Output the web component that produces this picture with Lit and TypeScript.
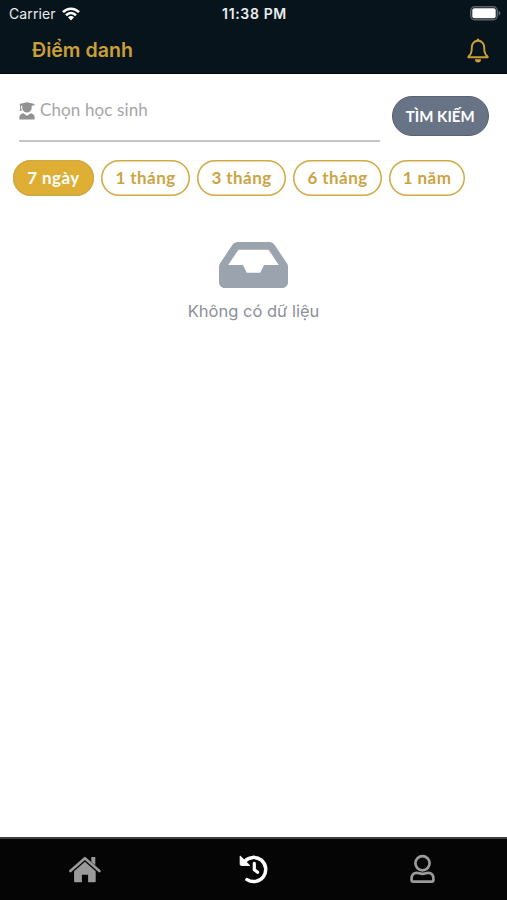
import { LitElement, html, css, svg } from "lit";
import { customElement, state } from "lit/decorators.js";
import { classMap } from "lit/directives/class-map.js";

const wifi = html`<svg class="wifi" viewBox="0 0 18 14">
  <g fill="none" stroke="#fff" stroke-width="2.6">
    <path d="M1 5.2C5.6.6 12.4.6 17 5.2" />
    <path d="M4 8.300c3-2.900 7-2.900 10 0" />
  </g>
  <path d="M6 10.300c1.800-1.600 4.200-1.600 6 0L9 13.500z" fill="#fff" />
</svg>`;

const battery = html`<svg class="battery" viewBox="0 0 31 15">
  <rect x=".75" y=".75" width="26.500" height="13" rx="4" fill="none" stroke="#5a6268" stroke-width="1.500" />
  <rect x="2.300" y="2.300" width="23.400" height="9.900" rx="2" fill="#fff" />
  <path d="M28.600 4.800c2.400 1 2.400 4 0 5z" fill="#5a6268" />
</svg>`;

const bell = html`<svg class="bell" viewBox="0 0 22 25">
  <path d="M11 2.800c-4.100 0-6.200 3-6.200 6.700 0 4.700-.7 6.800-2.600 8.300-.6.5-.9.900-.9 1.400h19.400c0-.5-.3-.9-.9-1.400-1.900-1.500-2.600-3.600-2.600-8.300 0-3.700-2.100-6.700-6.200-6.700z"
    fill="none" stroke="#cb9f38" stroke-width="1.900" stroke-linejoin="round" />
  <path d="M9.500 2.400a1.500 1.900 0 0 1 3 0zM8 21.300h6a3 3.200 0 0 1-6 0z" fill="#cb9f38" />
</svg>`;

const student = html`<svg class="student" viewBox="0 0 16 18">
  <path d="M8 .3 15.600 1.900v1.200L12.700 4v1.900a4.700 4.700 0 0 1-9.400 0V4l-1.200-.4v2.300l.8 2.800H.6l.7-2.800L.9 3 .4 1.900z" />
  <path d="M4.300 11.200 8 13.700l3.700-2.500c2.500.5 4 2 4 4.400v.8c0 .8-.4 1.200-1.200 1.200h-13c-.8 0-1.200-.4-1.200-1.200v-.8c0-2.400 1.500-3.900 4-4.400z" />
</svg>`;

const inbox = html`<svg class="inbox" viewBox="0 64 576 384">
  <path d="M567.938 243.908L462.25 85.374A48.003 48.003 0 0 0 422.311 64H153.689a48 48 0 0 0-39.938 21.374L8.062 243.908A47.994 47.994 0 0 0 0 270.533V400c0 26.510 21.490 48 48 48h480c26.510 0 48-21.490 48-48V270.533a47.994 47.994 0 0 0-8.062-26.625zM162.252 128h251.497l85.333 128H376l-32 64H232l-32-64H76.918l85.334-128z" />
</svg>`;

const tabs = [
  {
    name: "home",
    icon: svg`<path d="M1.400 15 15.900 2.200 30.400 15" fill="none" stroke="#9a9a9a" stroke-width="2.600" stroke-linecap="round" stroke-linejoin="round"/>
      <path d="M22.300 1h4v8.200l-4-3.500zM15.900 5.800 26.700 15.300v10.200c0 .5-.3.800-.8.800h-6.800v-7.500h-6.200v7.500H5.900c-.5 0-.8-.3-.8-.8V15.300z" fill="#9a9a9a"/>`,
  },
  {
    name: "history",
    icon: svg`<path d="M6.800 7.200A12.100 12.100 0 1 1 9 25.600" fill="none" stroke="#fff" stroke-width="3.500" stroke-linecap="round"/>
      <path d="M2.200 2v8.300c0 .7.400 1.100 1.100 1.100h8.400z" fill="#fff" stroke="#fff" stroke-width="1" stroke-linejoin="round"/>
      <path d="M16.300 9.300v6.400l3.300 2.600" fill="none" stroke="#fff" stroke-width="3.200" stroke-linecap="round" stroke-linejoin="round"/>`,
  },
  {
    name: "profile",
    icon: svg`<g fill="none" stroke="#9a9a9a" stroke-width="2.700" stroke-linejoin="round"><circle cx="15.500" cy="9.300" r="7.100"/>
      <path d="M9.700 18.800c2.300 0 2.800 1 5.800 1s3.500-1 5.800-1c3.300 0 5.100 2.500 5.100 5.800v1.500c0 1-.5 1.500-1.500 1.500H6.100c-1 0-1.500-.5-1.500-1.500v-1.500c0-3.300 1.800-5.800 5.100-5.800z"/></g>`,
  },
];

@customElement("app-root")
export class AppRoot extends LitElement {
  @state() private range = 0;

  private ranges = ["7 ngày", "1 tháng", "3 tháng", "6 tháng", "1 năm"];

  static styles = css`
    :host {
      display: flex;
      flex-direction: column;
      height: 100vh;
      background: #fff;
      font-family: Inter, "Liberation Sans", sans-serif;
    }
    * { box-sizing: border-box; }
    svg { display: block; flex: none; }
    header {
      height: 74px;
      background: #07141c;
      color: #cb9f38;
      border-bottom: 1px solid #01060a;
    }
    .status {
      display: grid;
      grid-template-columns: 1fr auto 1fr;
      align-items: center;
      height: 27px;
      padding: 0 6px 0 9px;
      color: #e9edef;
      font-size: 14px;
      line-height: 27px;
    }
    .carrier { display: flex; align-items: center; gap: 6px; }
    .carrier span { letter-spacing: 0.1px; }
    .time { font-weight: 600; font-size: 14px; letter-spacing: 0.65px; margin-right: 1px; }
    .wifi { width: 18px; height: 14px; }
    .battery { width: 31px; height: 15px; justify-self: end; }
    .title {
      display: flex;
      justify-content: space-between;
      align-items: center;
      height: 46px;
      padding: 0 18.5px 0 32px;
    }
    h1 { margin: 0; font-size: 19.600px; line-height: 24px; font-weight: 600; padding-bottom: 1px; }
    .bell { width: 22px; height: 25px; }
    main { flex: 1; }
    .search { display: flex; padding: 22px 18.5px 0 19px; gap: 12px; align-items: flex-start; }
    .field {
      display: flex;
      gap: 5px;
      flex: 1;
      height: 46px;
      padding-top: 4px;
      border-bottom: 2px solid #c5c5c5;
      color: #a6a6a6;
      font: 400 17px/20px Lato, sans-serif;
      letter-spacing: 0.12px;
    }
    .student { width: 16px; height: 18px; fill: #929292; margin-top: 2px; }
    .search button {
      width: 96.500px;
      height: 39.500px;
      padding: 0;
      border: 1px solid #566172;
      border-radius: 20px;
      background: #687385;
      color: #fff;
      font: 700 15px/20px Lato, sans-serif;
    }
    .ranges { display: flex; gap: 7px; padding: 18px 13px 0; }
    .chip {
      height: 36px;
      width: 89px;
      padding: 0;
      border: 0;
      box-shadow: inset 0 0 0 1.500px #d1a943;
      border-radius: 18px;
      background: #fff;
      color: #cba443;
      font: 700 17px/20px Lato, sans-serif;
      letter-spacing: 0.450px;
    }
    .chip.first { width: 81px; }
    .chip.last { width: 76px; }
    .chip.active { background: #dfae35; color: #fff; }
    .empty {
      display: flex;
      flex-direction: column;
      align-items: center;
      padding-top: 46px;
      color: #8b9099;
      font-size: 16.500px;
      line-height: 20px;
      gap: 13px;
    }
    .inbox { width: 69px; height: 46px; fill: #9ba3af; }
    nav {
      display: grid;
      grid-template-columns: repeat(3, 1fr);
      height: 63px;
      border-top: 2px solid #3e3e3e;
      background: #050505;
      justify-items: center;
      padding-top: 15px;
    }
    nav svg { width: 32px; height: 31px; }
    .home { margin-top: 2px; }
  `;

  render() {
    return html`
      <header>
        <div class="status">
          <div class="carrier"><span>Carrier</span>${wifi}</div>
          <div class="time">11:38 PM</div>
          ${battery}
        </div>
        <div class="title"><h1>Điểm danh</h1>${bell}</div>
      </header>
      <main>
        <div class="search">
          <div class="field">${student}<span>Chọn học sinh</span></div>
          <button>TÌM KIẾM</button>
        </div>
        <div class="ranges">
          ${this.ranges.map(
            (label, i) => html`<button
              class=${classMap({
                chip: true,
                first: i === 0,
                last: i === this.ranges.length - 1,
                active: i === this.range,
              })}
              @click=${() => (this.range = i)}
            >${label}</button>`
          )}
        </div>
        <div class="empty">${inbox}<span>Không có dữ liệu</span></div>
      </main>
      <nav>
        ${tabs.map((t) => html`<svg class=${t.name} viewBox="0 0 32 31">${t.icon}</svg>`)}
      </nav>
    `;
  }
}
